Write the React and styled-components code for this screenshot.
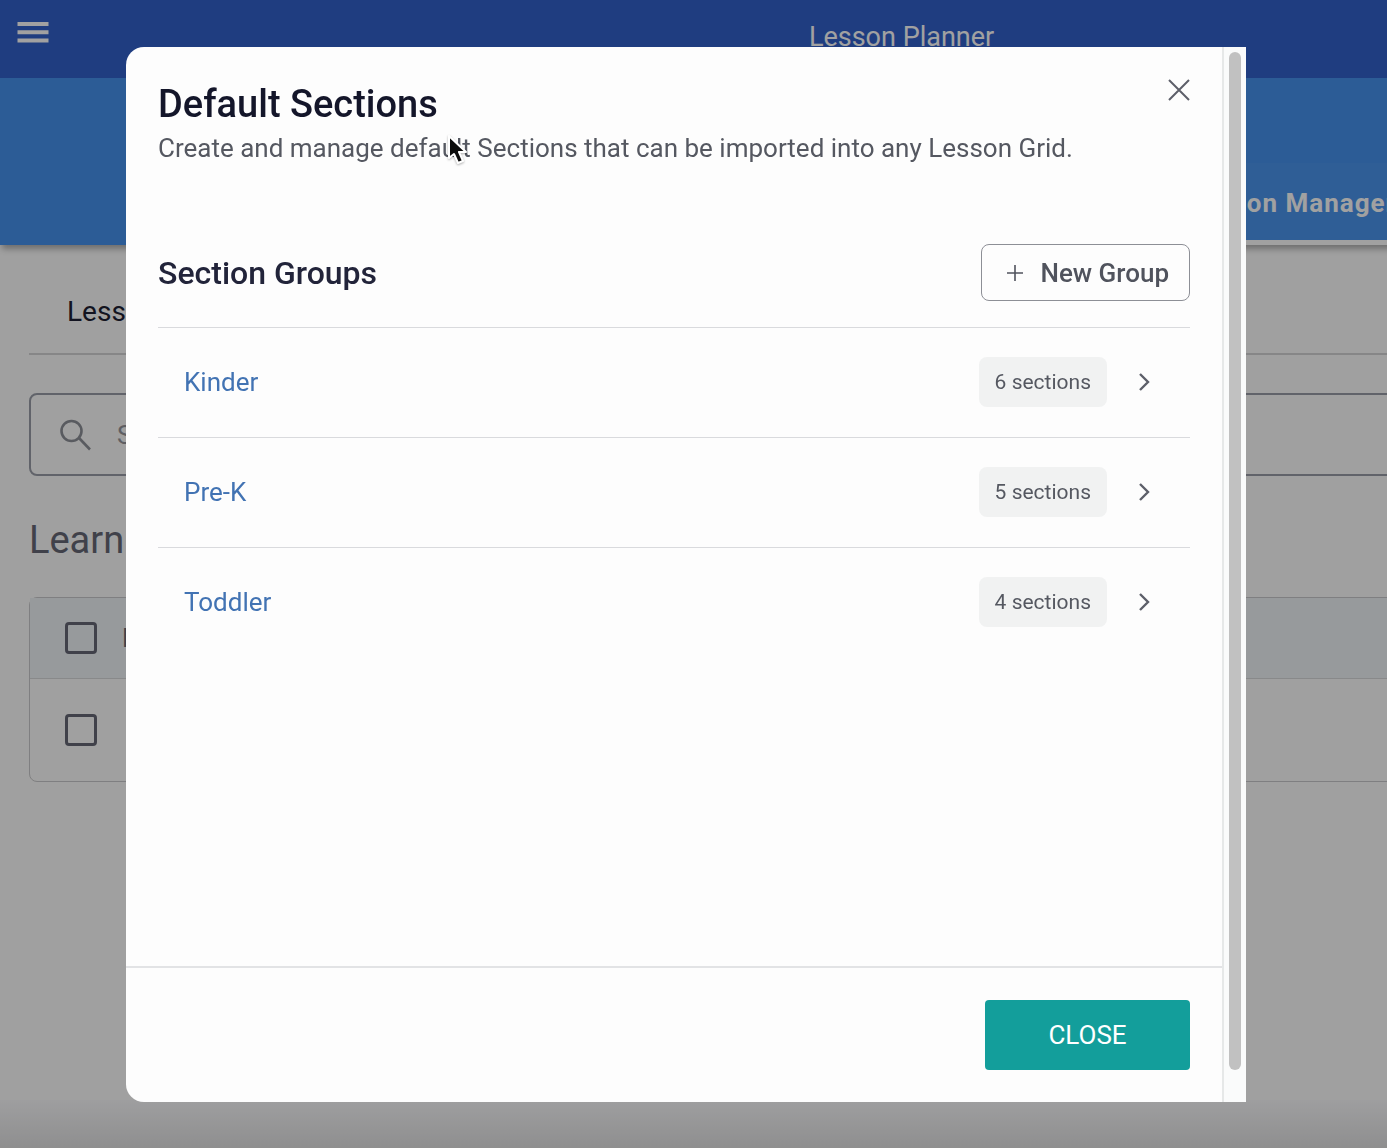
import React from "react";
import styled, { createGlobalStyle } from "styled-components";

const GlobalStyle = createGlobalStyle`
  *, *::before, *::after { box-sizing: border-box; }
  body {
    margin: 0;
    background: #ffffff;
    font-family: Roboto, "Liberation Sans", sans-serif;
    color: #1d1f33;
  }
  h1, h2, p, ul { margin: 0; padding: 0; }
  button, input { font-family: inherit; }
`;

const Viewport = styled.div`
  height: 100vh;
  overflow: hidden;
`;

const Page = styled.div`
  width: 130%;
  height: 100%;
  display: flex;
  flex-direction: column;
  background: #fdfdfd;
`;

const TopBar = styled.header`
  height: 78px;
  display: grid;
  grid-template-columns: 1fr auto 1fr;
  align-items: start;
  padding: 16px;
  background: #3161cb;
`;

const MenuButton = styled.button`
  justify-self: start;
  display: flex;
  padding: 0;
  border: 0;
  background: none;
  color: #ffffff;
`;

const AppName = styled.span`
  padding-top: 4px;
  font-size: 27px;
  line-height: 34px;
  color: #ffffff;
`;

const TabBar = styled.nav`
  height: 167px;
  flex: none;
  display: flex;
  align-items: flex-end;
  padding-left: 1120px;
  background: #4692ee;
  box-shadow: 0 6px 6px -2px rgba(0, 0, 0, 0.3);
`;

const Tab = styled.a`
  height: 82px;
  flex: 1;
  padding: 24px 40px 0 68px;
  border-bottom: 5px solid #ffffff;
  background: rgba(255, 255, 255, 0.03);
  font-size: 26px;
  font-weight: 700;
  line-height: 32px;
  letter-spacing: 1px;
  white-space: nowrap;
  text-decoration: none;
  color: #ffffff;
`;

const Content = styled.main`
  flex: 1;
  display: flex;
  flex-direction: column;
  padding: 0 29px;
`;

const Crumb = styled.div`
  height: 110px;
  padding: 50px 38px 0;
  border-bottom: 2px solid #d4d4d6;
  font-size: 28px;
  line-height: 34px;
`;

const SearchField = styled.label`
  height: 83px;
  margin-top: 38px;
  padding: 0 28px;
  display: flex;
  align-items: center;
  gap: 22px;
  border: 2px solid #9a9ea8;
  border-radius: 8px;
  color: #8e9198;
`;

const SearchInput = styled.input`
  flex: 1;
  border: 0;
  background: none;
  font-size: 26px;
  &::placeholder { color: #96969c; opacity: 1; }
`;

const PageHeading = styled.h2`
  margin-top: 40px;
  font-size: 38px;
  font-weight: 400;
  line-height: 48px;
  color: #666875;
`;

const Table = styled.table`
  margin-top: 33px;
  border: 1px solid #cacacc;
  border-radius: 8px;
  border-spacing: 0;
  font-size: 26px;
`;

const HeadRow = styled.tr`
  height: 80px;
  background: #eff4f8;
`;

const BodyRow = styled.tr`
  height: 103px;
`;

const Cell = styled.td`
  padding: 0;
  text-align: left;
  font-weight: 400;
  color: #666875;
  vertical-align: middle;
  border-top: ${(p) => (p.$ruled ? "1px solid #d8d9db" : "0")};
`;

const CheckCell = styled(Cell)`
  width: 92px;
  padding-left: 35px;
`;

const CheckBox = styled.input`
  appearance: none;
  display: block;
  width: 32px;
  height: 32px;
  margin: 0;
  border: 3px solid #666875;
  border-radius: 4px;
`;

const PageFoot = styled.div`
  height: 48px;
  background: linear-gradient(#fbfbfd, #e2e2e3);
`;

const Overlay = styled.div`
  position: fixed;
  inset: 0;
  display: flex;
  padding: 47px 141px 46px 126px;
  background: rgba(0, 0, 0, 0.37);
`;

const Dialog = styled.section`
  flex: 1;
  display: flex;
  overflow: hidden;
  border-radius: 18px 0 0 18px;
  background: #fdfdfd;
`;

const DialogMain = styled.div`
  flex: 1;
  display: flex;
  flex-direction: column;
`;

const DialogBody = styled.div`
  flex: 1;
  padding: 32px;
`;

const TitleRow = styled.div`
  display: flex;
  justify-content: space-between;
  align-items: flex-start;
`;

const Title = styled.h1`
  font-size: 38px;
  font-weight: 500;
  line-height: 50px;
  color: #14162a;
`;

const IconButton = styled.button`
  display: flex;
  padding: 0;
  border: 0;
  background: none;
  color: #5d5f69;
`;

const Subtitle = styled.p`
  font-size: 26px;
  line-height: 38px;
  color: #555861;
`;

const GroupsRow = styled.div`
  display: flex;
  justify-content: space-between;
  align-items: center;
  margin-top: 77px;
  padding-bottom: 26px;
`;

const GroupsTitle = styled.h2`
  font-size: 32px;
  font-weight: 500;
  line-height: 40px;
  color: #22243a;
`;

const NewGroupButton = styled.button`
  height: 57px;
  display: flex;
  align-items: center;
  gap: 16px;
  padding: 0 20px 0 24px;
  border: 1px solid #8d8f96;
  border-radius: 8px;
  background: none;
  font-size: 26px;
  font-weight: 500;
  color: #50535d;
`;

const GroupList = styled.ul`
  list-style: none;
`;

const GroupItem = styled.li`
  height: 110px;
  display: flex;
  align-items: center;
  gap: 24px;
  padding: 0 33px 2px 26px;
  border-top: 1px solid #d9dadd;
`;

const GroupLink = styled.a`
  flex: 1;
  font-size: 26px;
  line-height: 32px;
  text-decoration: none;
  color: #4273b3;
`;

const CountBadge = styled.span`
  height: 50px;
  display: flex;
  align-items: center;
  padding: 0 16px;
  border-radius: 8px;
  background: #f1f2f2;
  font-size: 21px;
  color: #555861;
`;

const DialogFooter = styled.footer`
  display: flex;
  justify-content: flex-end;
  padding: 32px;
  border-top: 2px solid #e2e3e5;
`;

const CloseButton = styled.button`
  width: 205px;
  height: 70px;
  border: 0;
  border-radius: 4px;
  background: #139e9b;
  font-size: 26px;
  color: #ffffff;
`;

const ScrollTrack = styled.div`
  width: 24px;
  display: flex;
  padding: 5px 5px 32px;
  border-left: 2px solid #e6e8e8;
  background: #fafbfb;
`;

const ScrollThumb = styled.div`
  flex: 1;
  border-radius: 8px;
  background: #c1c1c1;
`;

const Pointer = styled.svg`
  position: absolute;
  left: 446px;
  top: 133px;
  filter: drop-shadow(0 1px 1px rgba(0, 0, 0, 0.3));
`;

const groups = [
  { name: "Kinder", count: 6 },
  { name: "Pre-K", count: 5 },
  { name: "Toddler", count: 4 },
];

function Background() {
  return (
    <Page>
      <TopBar>
        <MenuButton aria-label="Menu">
          <svg width="34" height="34" viewBox="0 0 34 34" fill="currentColor">
            <path d="M1.5 6h31v4h-31zM1.5 14.2h31v4h-31zM1.5 22.6h31v4h-31z" />
          </svg>
        </MenuButton>
        <AppName>Lesson Planner</AppName>
      </TopBar>
      <TabBar>
        <Tab href="#manager">Lesson Manager</Tab>
      </TabBar>
      <Content>
        <Crumb>Lesson</Crumb>
        <SearchField>
          <svg width="34" height="34" viewBox="0 0 34 34" fill="none" stroke="currentColor" strokeWidth="2.6">
            <circle cx="12.5" cy="13" r="10" />
            <path d="M20 20l11 11.500" />
          </svg>
          <SearchInput aria-label="Search" placeholder="Search" />
        </SearchField>
        <PageHeading>Learning</PageHeading>
        <Table>
          <thead>
            <HeadRow>
              <CheckCell as="th"><CheckBox type="checkbox" aria-label="Select all" /></CheckCell>
              <Cell as="th">Name</Cell>
            </HeadRow>
          </thead>
          <tbody>
            <BodyRow>
              <CheckCell $ruled><CheckBox type="checkbox" aria-label="Select row" /></CheckCell>
              <Cell $ruled />
            </BodyRow>
          </tbody>
        </Table>
      </Content>
      <PageFoot />
    </Page>
  );
}

export default function App() {
  return (
    <Viewport>
      <GlobalStyle />
      <Background />
      <Overlay>
        <Dialog role="dialog" aria-labelledby="dialog-title">
          <DialogMain>
            <DialogBody>
              <TitleRow>
                <Title id="dialog-title">Default Sections</Title>
                <IconButton aria-label="Close dialog">
                  <svg width="22" height="22" viewBox="0 0 22 22" fill="none" stroke="currentColor" strokeWidth="2">
                    <path d="M1 1l20 20M21 1L1 21" />
                  </svg>
                </IconButton>
              </TitleRow>
              <Subtitle>Create and manage default Sections that can be imported into any Lesson Grid.</Subtitle>
              <GroupsRow>
                <GroupsTitle>Section Groups</GroupsTitle>
                <NewGroupButton>
                  <svg width="18" height="18" viewBox="0 0 18 18" fill="none" stroke="currentColor" strokeWidth="1.6">
                    <path d="M9 1v16M1 9h16" />
                  </svg>
                  New Group
                </NewGroupButton>
              </GroupsRow>
              <GroupList>
                {groups.map((g) => (
                  <GroupItem key={g.name}>
                    <GroupLink href={"#" + g.name}>{g.name}</GroupLink>
                    <CountBadge>{g.count} sections</CountBadge>
                    <IconButton aria-label={"Open " + g.name}>
                      <svg width="26" height="26" viewBox="0 0 26 26" fill="none" stroke="currentColor" strokeWidth="2.4">
                        <path d="M9 5l8 8-8 8" />
                      </svg>
                    </IconButton>
                  </GroupItem>
                ))}
              </GroupList>
            </DialogBody>
            <DialogFooter>
              <CloseButton>CLOSE</CloseButton>
            </DialogFooter>
          </DialogMain>
          <ScrollTrack>
            <ScrollThumb />
          </ScrollTrack>
        </Dialog>
        <Pointer width="22" height="32" viewBox="0 0 22 32" aria-hidden="true">
          <path
            d="M3 3v22l5-4 4 9 5-2-4-9h7z"
            fill="#0b0b0b"
            stroke="#ffffff"
            strokeWidth="2"
            strokeLinejoin="round"
          />
        </Pointer>
      </Overlay>
    </Viewport>
  );
}
